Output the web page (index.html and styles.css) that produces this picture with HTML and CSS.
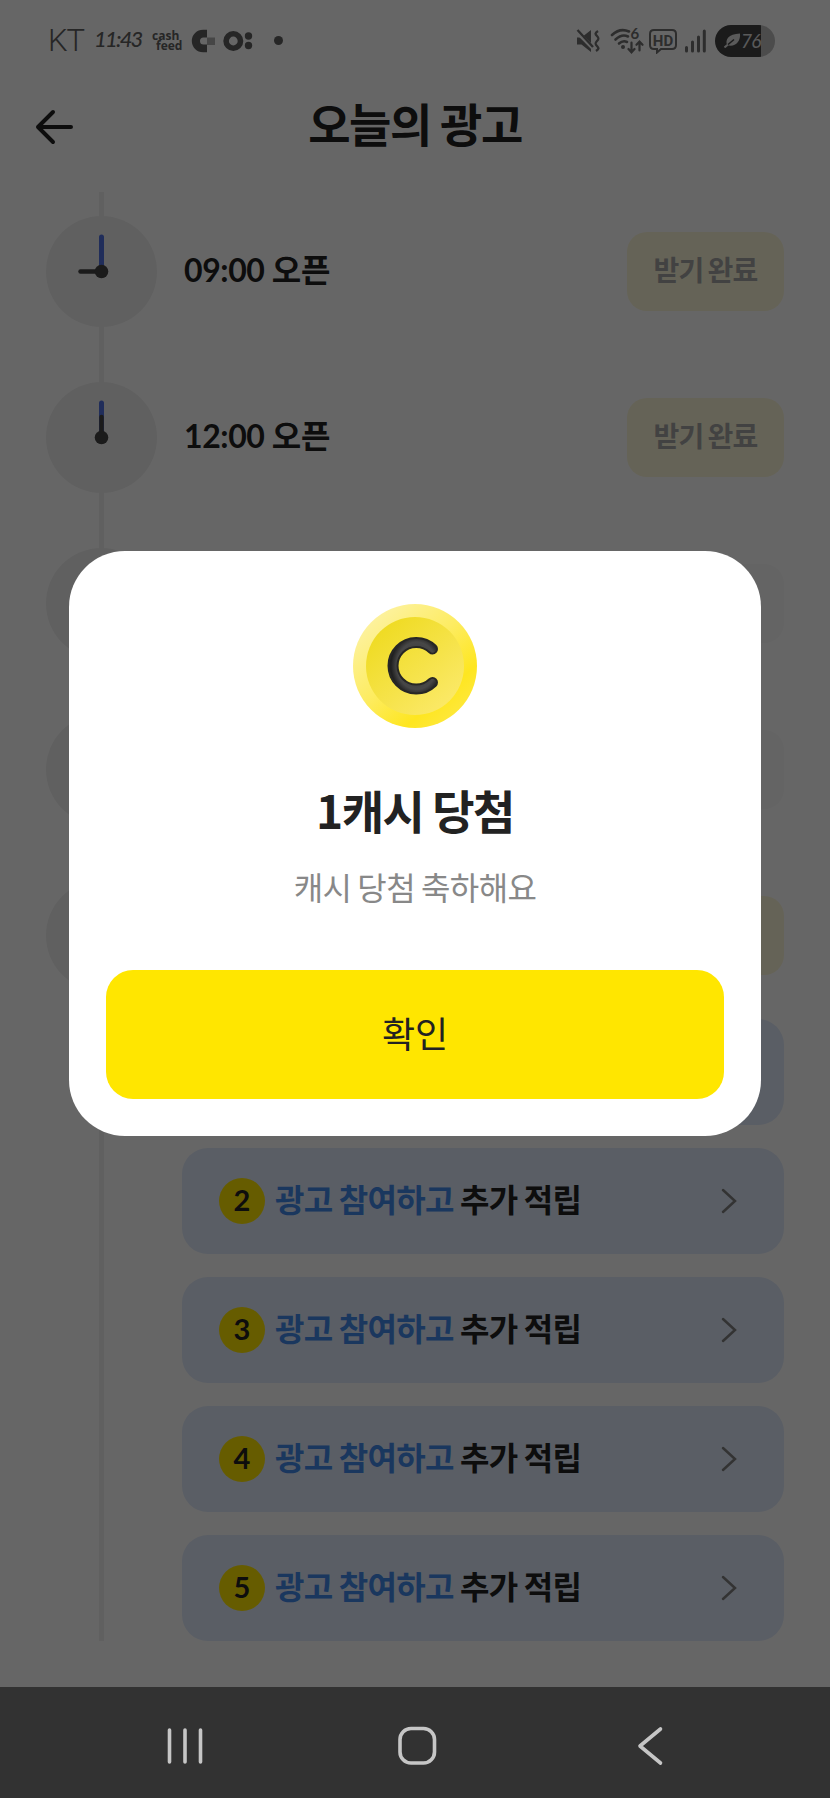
FILE: index.html
```html
<!DOCTYPE html>
<html lang="ko">
<head>
<meta charset="utf-8">
<title>오늘의 광고</title>
<link rel="stylesheet" href="styles.css">
</head>
<body>
<div class="screen">
  <header class="status">
    <div class="status-left">
      <span class="carrier">KT</span>
      <span class="clock-text">11:43</span>
      <span class="cashfeed"><span>cash</span><span>feed</span></span>
      <svg class="ico-c" width="24" height="24" viewBox="0 0 24 24"><path d="M16 .8H12a11.2 11.2 0 0 0 0 22.4H16V15.5H12.5a3.5 3.5 0 0 1 0-7H16z" fill="#606060"/><path d="M16 8.500h8v7.500h-8z" fill="#b0b0b0"/></svg>
      <svg class="ico-o" width="30" height="22" viewBox="0 0 30 22"><circle cx="10.300" cy="11" r="7.200" fill="none" stroke="#606060" stroke-width="5.600"/><circle cx="25.500" cy="6" r="3.700" fill="#606060"/><circle cx="25.500" cy="15.500" r="3.700" fill="#606060"/></svg>
      <span class="dot"></span>
    </div>
    <div class="status-right">
      <svg width="24" height="24" viewBox="0 0 24 24"><path d="M1 8.500h4.500L15 1v22l-9.500-7.500H1z" fill="#707070"/><path d="M0 2l17 17" stroke="#fff" stroke-width="4"/><path d="M1.500 1L17 18" stroke="#707070" stroke-width="2.300"/><path d="M22 2c-3 2 -3 3 -1 5s2 3 0 5 -2 3 0 5 2 3 -1 5" fill="none" stroke="#707070" stroke-width="2.400"/></svg>
      <svg class="wifi" width="34" height="30" viewBox="0 -2 34 30"><g fill="none" stroke="#707070" stroke-width="2.600" stroke-linecap="round"><path d="M2 7Q10-.5 19 3.500"/><path d="M5.500 11.500Q12 5.500 18 8.500"/><path d="M9 15.500Q13 12 17 14"/><path d="M21.500 14.500v9.500M18.500 21l3 3.300 3-3.300M29.500 22.500V14M26.500 16.800l3-3.200 3 3.200" stroke-width="2.200"/></g><circle cx="13" cy="19" r="2" fill="#707070"/><text x="20.500" y="11" class="wifi-six">6</text></svg>
      <svg class="hd" width="28" height="26" viewBox="0 0 28 26"><path d="M5 2h18q4 0 4 4v11q0 4-4 4H12l-4 3.500V21H5q-4 0-4-4V6q0-4 4-4z" fill="none" stroke="#707070" stroke-width="2"/><text x="14" y="17.500" text-anchor="middle" class="hd-text">HD</text></svg>
      <svg class="signal" width="22" height="24" viewBox="0 0 22 24"><path d="M2.500 18.500v3.500M8.500 13v9M14.500 8v14M20.300 2v20" stroke="#707070" stroke-width="3" stroke-linecap="round"/></svg>
      <span class="battery"><svg width="17" height="15" viewBox="0 0 17 15"><path d="M3 12C1 7 4 1 16 .5C17 9 10 15 3 12z" fill="#e0e0e0"/><path d="M.5 14.500L10 6.500" stroke="#444" stroke-width="1.500"/><path d="M.5 14.500L4 11.500" stroke="#e0e0e0" stroke-width="2"/></svg><span>76</span></span>
    </div>
  </header>
  <div class="titlebar">
    <svg class="back" width="40" height="36" viewBox="0 0 40 36"><path d="M18 3L3 18l15 15M3 18h33" fill="none" stroke="#222" stroke-width="4" stroke-linecap="round" stroke-linejoin="round"/></svg>
    <h1>오늘의 광고</h1>
  </div>
  <main class="timeline">
    <div class="row"><div class="dial"><svg width="111" height="111" viewBox="0 0 111 111"><path d="M55.500 55V21" stroke="#5070e0" stroke-width="5" stroke-linecap="round"/><path d="M55.500 55.500H34.500" stroke="#444" stroke-width="4.500" stroke-linecap="round"/><circle cx="55.500" cy="55.500" r="6.800" fill="#444"/></svg></div><span class="time">09:00 오픈</span><span class="claim">받기 완료</span></div>
    <div class="row"><div class="dial"><svg width="111" height="111" viewBox="0 0 111 111"><path d="M55.500 55V21" stroke="#5070e0" stroke-width="5" stroke-linecap="round"/><path d="M55.500 55.500V35" stroke="#444" stroke-width="4.500" stroke-linecap="round"/><circle cx="55.500" cy="55.500" r="6.800" fill="#444"/></svg></div><span class="time">12:00 오픈</span><span class="claim">받기 완료</span></div>
    <div class="row"><div class="dial"></div><span class="claim idle"></span></div>
    <div class="row"><div class="dial"></div><span class="claim idle"></span></div>
    <div class="row"><div class="dial"></div><span class="claim"></span></div>
    <div class="cards">
      <div class="card"></div>
      <div class="card"><b>2</b><p><em>광고 참여하고</em> 추가 적립</p><svg width="18" height="28" viewBox="0 0 18 28"><path d="M3 3l12 11L3 25" class="chev"/></svg></div>
      <div class="card"><b>3</b><p><em>광고 참여하고</em> 추가 적립</p><svg width="18" height="28" viewBox="0 0 18 28"><path d="M3 3l12 11L3 25" class="chev"/></svg></div>
      <div class="card"><b>4</b><p><em>광고 참여하고</em> 추가 적립</p><svg width="18" height="28" viewBox="0 0 18 28"><path d="M3 3l12 11L3 25" class="chev"/></svg></div>
      <div class="card"><b>5</b><p><em>광고 참여하고</em> 추가 적립</p><svg width="18" height="28" viewBox="0 0 18 28"><path d="M3 3l12 11L3 25" class="chev"/></svg></div>
    </div>
  </main>
  <nav class="navbar">
    <svg width="38" height="42" viewBox="0 0 38 42"><path d="M3.500 5v32M19 5v32M34.500 5v32" class="nav-line"/></svg>
    <svg class="home" width="42" height="42" viewBox="0 0 42 42"><rect x="4" y="3.500" width="34.500" height="34.500" rx="11" class="nav-line"/></svg>
    <svg width="28" height="42" viewBox="0 0 28 42"><path d="M24.500 4L4 21l20.500 17" class="nav-line"/></svg>
  </nav>
</div>
<div class="scrim">
  <section class="modal">
    <svg class="coin" width="126" height="126" viewBox="0 0 126 126">
      <defs>
        <linearGradient id="rim" x1=".15" y1=".1" x2=".85" y2=".9"><stop offset="0" stop-color="#fdf2a0"/><stop offset=".45" stop-color="#fdec62"/><stop offset=".8" stop-color="#fee620"/><stop offset="1" stop-color="#fee83c"/></linearGradient>
        <linearGradient id="face" x1=".15" y1=".1" x2=".85" y2=".9"><stop offset="0" stop-color="#efdb22"/><stop offset="1" stop-color="#fbe968"/></linearGradient>
        <radialGradient id="ink" cx=".6" cy=".5" r=".65"><stop offset="0" stop-color="#333"/><stop offset=".78" stop-color="#474747"/><stop offset="1" stop-color="#202020"/></radialGradient>
      </defs>
      <circle cx="63" cy="63" r="62" fill="url(#rim)"/><circle cx="63" cy="63" r="49" fill="url(#face)"/>
      <path d="M80.500 46A23.300 23.300 0 1 0 80.500 79.500" fill="none" stroke="#272725" stroke-width="11" stroke-linecap="round"/>
      <path d="M80.500 46A23.300 23.300 0 1 0 80.500 79.500" fill="none" stroke="url(#ink)" stroke-width="7" stroke-linecap="round"/>
    </svg>
    <h2>1캐시 당첨</h2>
    <p>캐시 당첨 축하해요</p>
    <button type="button">확인</button>
  </section>
</div>
</body>
</html>
```

FILE: styles.css
```css
* { box-sizing: border-box; }
body { margin: 0; font-family: "Noto Sans CJK KR", sans-serif; color: #222; }
.screen { width: 830px; height: 1798px; background: #fff; display: flex; flex-direction: column; overflow: hidden; }
svg { display: block; flex: none; }

.status { height: 80px; flex: none; padding: 0 55px 0 48px; display: flex; justify-content: space-between; color: #606060; }
.status-left, .status-right { display: flex; align-items: center; height: 81px; }
.carrier { font: 300 31px/40px Roboto, sans-serif; letter-spacing: -1px; width: 46px; color: #606060; }
.clock-text { font: italic 500 22px/30px Lato, sans-serif; letter-spacing: -1.8px; width: 58px; padding-bottom: 4px; white-space: nowrap; }
.cashfeed { display: flex; flex-direction: column; font: 700 12px/10px "Open Sans", sans-serif; width: 39px; }
.cashfeed span + span { padding-left: 4px; }
.ico-o { margin-left: 8px; }
.dot { width: 9px; height: 9px; border-radius: 50%; background: #606060; margin-left: 21px; }
.wifi { margin-left: 10px; }
.wifi-six { font: 700 15px Lato, sans-serif; fill: #707070; }
.hd { margin-left: 5px; }
.hd-text { font: 700 15px Roboto, sans-serif; fill: #707070; }
.signal { margin-left: 7px; }
.battery { width: 60px; height: 32px; margin-left: 9px; padding-left: 9px; border-radius: 16px; background: linear-gradient(90deg, #444 46px, #bebebe 46px); display: flex; align-items: center; gap: 0; color: #e0e0e0; font: italic 400 19px/32px Lato, sans-serif; letter-spacing: -.8px; }

.titlebar { height: 112px; flex: none; display: grid; grid-template-columns: 80px 1fr 80px; align-items: start; }
.back { margin: 29px 0 0 35px; }
h1 { margin: 12px 0 0; text-align: center; font-size: 46px; line-height: 60px; font-weight: 700; letter-spacing: -1.5px; word-spacing: -2px; white-space: nowrap; }

.timeline { height: 1449px; flex: none; padding: 24px 46px 0; background: linear-gradient(#f0f0f0, #f0f0f0) 99px 0 / 5px 100% no-repeat; }
.row { height: 166px; display: flex; align-items: flex-start; }
.dial { width: 111px; height: 111px; border-radius: 50%; background: #f0f0f0; flex: none; }
.time { font: 700 32px/50px Lato, "Noto Sans CJK KR", sans-serif; letter-spacing: -.4px; margin: 29px 0 0 27px; white-space: nowrap; }
.claim { width: 157px; height: 79px; margin: 16px 0 0 auto; border-radius: 20px; background: #fdf8d9; color: #a5a5a5; font-size: 28px; line-height: 74px; font-weight: 700; letter-spacing: -.8px; word-spacing: -3px; text-align: center; }
.idle { background: #fafafa; }
.cards { margin: -27px 0 0 136px; display: flex; flex-direction: column; gap: 23px; }
.card { height: 106px; flex: none; padding: 0 46px 0 37px; border-radius: 26px; background: #e1ebfc; display: flex; align-items: center; }
.card b { width: 46px; height: 46px; border-radius: 50%; background: #ffe600; text-align: center; font: 700 29px/43px Lato, sans-serif; }
.card p { margin: 0 auto 0 10px; font-size: 32px; line-height: 48px; padding-bottom: 7px; font-weight: 700; letter-spacing: -.7px; word-spacing: -2px; white-space: nowrap; }
.card em { font-style: normal; color: #4289ec; }
.chev { fill: none; stroke: #808080; stroke-width: 2.5; stroke-linecap: round; }

.navbar { position: relative; z-index: 2; height: 111px; margin-top: auto; flex: none; background: #323232; padding: 6px 166px 0 166px; display: flex; justify-content: space-between; align-items: center; }
.home { margin-right: 7px; }
.nav-line { fill: none; stroke: #c6c6c6; stroke-width: 3.6; stroke-linecap: round; stroke-linejoin: round; }

.scrim { position: absolute; left: 0; top: 0; width: 830px; height: 1798px; background: rgba(0,0,0,.6); padding: 551px 69px 0; }
.modal { width: 692px; height: 585px; background: #fff; border-radius: 56px; padding: 52px 37px 37px; display: flex; flex-direction: column; align-items: center; }
h2 { margin: 47px 0 0; font-size: 46px; line-height: 66px; font-weight: 700; letter-spacing: -1.500px; word-spacing: -2.500px; }
.modal p { margin: 21px 0 0; font-size: 32px; line-height: 46px; color: #888; letter-spacing: -.6px; word-spacing: -2.400px; }
.modal button { margin: auto 0 0; width: 618px; height: 129px; flex: none; border: 0; border-radius: 27px; background: #ffe600; color: #222; font: 400 36px/50px "Noto Sans CJK KR", sans-serif; padding: 0 0 6px; }
```
